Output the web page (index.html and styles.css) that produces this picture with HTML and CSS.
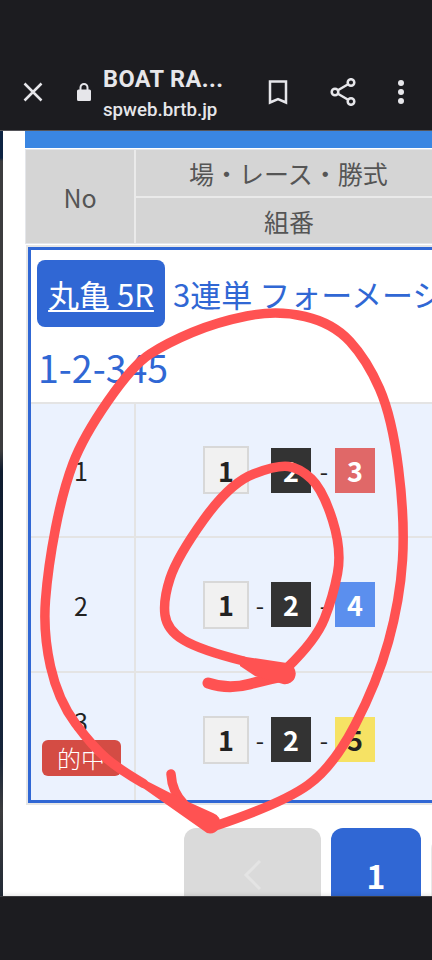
FILE: index.html
```html
<!DOCTYPE html>
<html lang="ja">
<head>
<meta charset="utf-8">
<title>BOAT RACE</title>
<link rel="stylesheet" href="styles.css">
</head>
<body>
<div class="screen">
  <header class="chrome">
    <svg class="ic ic-close" viewBox="0 0 24 24"><path d="M3.500 3.500 20.500 20.500M20.500 3.500 3.500 20.500"/></svg>
    <svg class="ic-lock" viewBox="0 0 16 20"><path class="fill" d="M2.500 7.500h11a1.500 1.500 0 0 1 1.500 1.500v8.500a1.500 1.500 0 0 1-1.500 1.500h-11A1.500 1.500 0 0 1 1 17.500V9a1.500 1.500 0 0 1 1.500-1.500z"/><path class="line" d="M4.500 8V5.500a3.500 3.500 0 0 1 7 0V8"/></svg>
    <div class="title">
      <div class="title-main">BOAT RA...</div>
      <div class="title-url">spweb.brtb.jp</div>
    </div>
    <svg class="ic ic-mark" viewBox="0 0 20 26"><path d="M2 2.500h16v21l-8-3.500-8 3.500z"/></svg>
    <svg class="ic ic-share" viewBox="0 0 26 28"><circle cx="21" cy="4.500" r="3.300"/><circle cx="21" cy="23.500" r="3.300"/><circle cx="5" cy="14" r="3.300"/><path d="M18.100 6.200 7.900 12.300M7.900 15.700l10.200 6.100"/></svg>
    <div class="dots"><i></i><i></i><i></i></div>
  </header>
  <main class="page">
    <div class="edge"></div>
    <div class="sheet">
      <div class="topbar"></div>
      <div class="grid-head">
        <div class="h-no">No</div>
        <div class="h-race">場・レース・勝式</div>
        <div class="h-combo">組番</div>
      </div>
      <section class="ticket">
        <div class="ticket-head">
          <p class="line-a"><a class="venue">丸亀 5R</a> <span class="bet">3連単 フォーメーション</span></p>
          <p class="line-b">1-2-345</p>
        </div>
        <div class="row row-one">
          <div class="no">1</div>
          <div class="combo"><b class="bt b1">1</b><span class="dash">-</span><b class="bt b2">2</b><span class="dash">-</span><b class="bt b3">3</b></div>
        </div>
        <div class="row">
          <div class="no">2</div>
          <div class="combo"><b class="bt b1">1</b><span class="dash">-</span><b class="bt b2">2</b><span class="dash">-</span><b class="bt b4">4</b></div>
        </div>
        <div class="row row-last">
          <div class="no">3<span class="hit">的中</span></div>
          <div class="combo"><b class="bt b1">1</b><span class="dash">-</span><b class="bt b2">2</b><span class="dash">-</span><b class="bt b5">5</b></div>
        </div>
      </section>
      <nav class="pager">
        <div class="pg pg-prev"><svg viewBox="0 0 20 32"><path d="M17 2 3 16l14 14"/></svg></div>
        <div class="pg pg-cur">1</div>
        <div class="pg pg-next"></div>
      </nav>
    </div>
    <svg class="scribble" viewBox="0 0 432 960">
      <path class="s" d="M218 825Q283 803 308 785Q333 767 355 725Q377 683 388.500 641.500Q400 600 402.500 560Q405 520 398.500 468.500Q392 417 379.500 388.500Q367 360 350 341.500Q333 323 305 316.500Q277 310 247 316Q217 322 192 332.500Q167 343 150 354Q133 365 108 401Q83 437 73 463.500Q63 490 55.500 528.500Q48 567 45.500 600Q43 633 50.500 666.500Q58 700 75.500 723.500Q93 747 106.500 758.500Q120 770 143.500 783.500"/>
      <path class="s" d="M287 668Q316 640 324.500 618.500Q333 597 337.500 573.500Q342 550 332.500 520Q323 490 311.500 479Q300 468 288.500 466.500Q277 465 253.500 474Q230 483 203.500 520Q177 557 170 578.500Q163 600 165 615Q167 630 183.500 640Q200 650 243.500 661"/>
      <path class="s tail" d="M208 683Q228 690 250 684T283 676"/>
      <path class="wedge" d="M240 656 287 663A10.500 10.500 0 0 1 283 684L255 676 240 666Z"/>
      <path class="s" d="M171 774Q172 792 184 804"/>
      <path class="wedge" d="M143 779 182 799 213 813A10 10 0 0 1 207 833L143 788Z"/>
    </svg>
  </main>
  <footer class="navbar"></footer>
</div>
</body>
</html>
```
FILE: styles.css
```css
* { box-sizing: border-box; }
html, body { margin: 0; padding: 0; }
body { width: 432px; height: 960px; overflow: hidden; background: #1c1c20; font-family: "Noto Sans CJK JP", "Noto Sans", sans-serif; }
.screen { width: 432px; height: 960px; display: flex; flex-direction: column; overflow: hidden; }

.chrome { height: 131px; flex: none; background: #1c1c20; border-bottom: 1px solid #55555a; display: flex; align-items: center; padding: 54px 0 0 21px; color: #e6e6ea; }
.ic { fill: none; stroke: #e6e6ea; stroke-width: 2.500; flex: none; }
.ic-close { width: 24px; height: 24px; }
.ic-lock { width: 16px; height: 20px; margin-left: 31px; flex: none; }
.ic-lock .fill { fill: #e6e6ea; }
.ic-lock .line { fill: none; stroke: #e6e6ea; stroke-width: 2; }
.title { margin: 4px 0 0 11px; width: 150px; flex: none; font-family: Roboto, sans-serif; }
.title-main { font-size: 23.500px; font-weight: 700; line-height: 28px; letter-spacing: .4px; }
.title-url { font-size: 18.700px; font-weight: 500; line-height: 26px; margin-top: 4px; }
.ic-mark { width: 20px; height: 26px; margin-left: 15px; }
.ic-share { width: 26px; height: 28px; margin-left: 42px; }
.dots { display: flex; flex-direction: column; gap: 3px; margin-left: 42px; }
.dots i { width: 6px; height: 6px; border-radius: 50%; background: #e6e6ea; }

.page { position: relative; flex: none; height: 765px; display: flex; background: #fff; overflow: hidden; }
.edge { width: 3px; flex: none; background: linear-gradient(#0d2342 0, #0d2342 27px, #3c3c3e 30px, #3c3c3e 320px, #0f1c30 340px, #16243a 620px, #3c3c3e 680px, #222a36 765px); }
.sheet { flex: none; width: 500px; margin-left: 22px; }
.topbar { height: 17px; background: #3a86e2; }
.grid-head { margin-top: 1px; border: 1px solid #e4e6ea; display: grid; grid-template-columns: 108px 400px; grid-template-rows: 46px 45px; gap: 2px; background: #eaeaea; height: 95px; font-size: 25px; color: #555; }
.grid-head > div { background: #d5d5d5; display: flex; align-items: center; }
.h-no { grid-row: 1 / 3; justify-content: center; }
.h-race { padding-left: 53px; }
.h-combo { padding-left: 128px; }

.ticket { margin: 3px 0 0 3px; border: 3px solid #3067d4; outline: 2px solid #e6e6e6; width: 560px; height: 556px; }
.ticket-head { height: 152px; padding: 10px 0 0 6px; color: #3067d4; font-size: 31px; }
.ticket-head p { margin: 0; white-space: nowrap; }
.line-a { display: flex; align-items: center; height: 67px; }
.venue { width: 128px; height: 67px; display: flex; align-items: center; justify-content: center; background: #3067d4; border-radius: 8px; color: #fff; text-decoration: underline; text-underline-offset: 3px; text-decoration-thickness: 2px; margin-right: 8px; font-size: 31px; }
.ticket-head .line-b { font-size: 37.500px; line-height: 42px; margin-top: 19px; margin-left: 1px; }
.row { height: 135px; display: flex; background: #ebf2fe; border-top: 2px solid #e4e4e4; color: #222; }
.row-one { height: 134px; }
.row-last { height: 129px; }
.no { width: 105px; flex: none; border-right: 2px solid #e4e4e4; padding-right: 3px; display: flex; flex-direction: column; align-items: center; justify-content: center; font-size: 25px; line-height: 30px; }
.row-last .no { padding-top: 9px; }
.hit { display: block; background: #d44c44; color: #fff; width: 79px; height: 36px; border-radius: 6px; font-size: 24px; font-weight: 300; line-height: 36px; text-align: center; margin-top: 4px; }
.combo { flex: none; padding-left: 67px; display: flex; align-items: center; gap: 6.500px; }
.row-last .combo { padding-top: 6px; }
.bt { display: flex; align-items: center; justify-content: center; width: 40px; height: 45px; font-size: 27px; font-weight: 700; color: #fff; }
.dash { font-size: 24px; color: #222; width: 9px; text-align: center; }
.b1 { width: 46px; height: 48px; background: #f1f1f1; border: 2px solid #d8d8d8; color: #222; }
.b2 { background: #333; margin-right: 2px; }
.b3 { background: #e06868; }
.b4 { background: #5b8fee; }
.b5 { background: #f6e264; color: #222; }

.pager { display: flex; gap: 10px; margin: 25px 0 0 159px; }
.pg { height: 94px; border-radius: 12px 12px 0 0; flex: none; display: flex; align-items: center; justify-content: center; }
.pg-prev { width: 137px; background: #dadada; }
.pg-prev svg { width: 20px; height: 32px; fill: none; stroke: #e4e4e4; stroke-width: 3; }
.pg-cur { width: 90px; background: #3067d4; color: #fff; font-size: 32px; font-weight: 700; }
.pg-next { width: 91px; background: #e8e8e8; margin-top: 9px; }

.scribble { position: absolute; left: 0; top: -131px; width: 432px; height: 960px; fill: none; pointer-events: none; }
.s { stroke: #ff5252; stroke-width: 9.500; stroke-linecap: round; stroke-linejoin: round; }
.tail { stroke-width: 11; }
.wedge { fill: #ff5252; }

.navbar { flex: 1; position: relative; background: #1c1c20; border-top: 1px solid #3a3a3e; box-shadow: 0 -2px 3px rgba(0, 0, 0, .08); }
```
